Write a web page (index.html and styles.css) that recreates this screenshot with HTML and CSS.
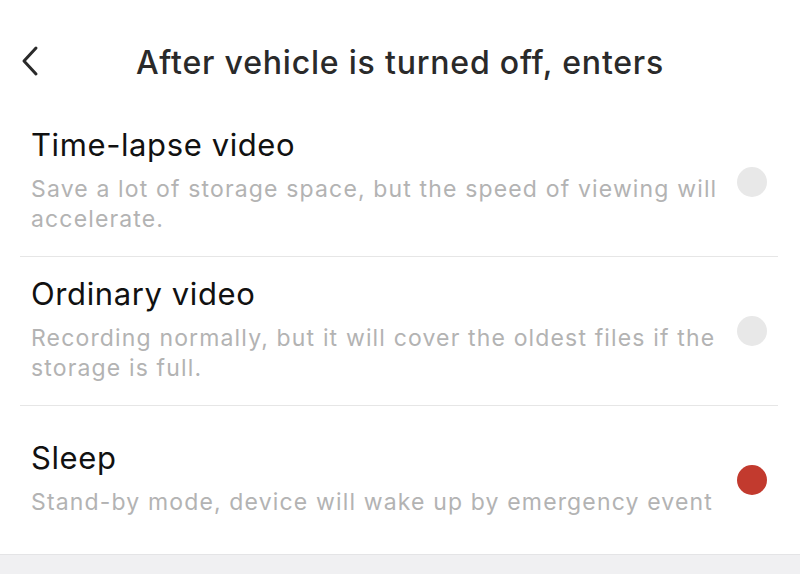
FILE: index.html
```html
<!DOCTYPE html>
<html>
<head>
<meta charset="utf-8">
<link rel="stylesheet" href="styles.css">
</head>
<body>
<div class="page">
  <header class="header">
    <span class="back">
      <svg width="20" height="32" viewBox="0 0 20 32"><path d="M16 3 L4 16 L16 29" fill="none" stroke="#2a2a2a" stroke-width="3" stroke-linecap="round" stroke-linejoin="round"/></svg>
    </span>
    <h1 class="title">After vehicle is turned off, enters</h1>
  </header>
  <ul class="list">
    <li class="item">
      <div class="text">
        <div class="name">Time-lapse video</div>
        <div class="desc">Save a lot of storage space, but the speed of viewing will accelerate.</div>
      </div>
      <span class="radio"></span>
    </li>
    <li class="item">
      <div class="text">
        <div class="name">Ordinary video</div>
        <div class="desc">Recording normally, but it will cover the oldest files if the storage is full.</div>
      </div>
      <span class="radio"></span>
    </li>
    <li class="item">
      <div class="text">
        <div class="name">Sleep</div>
        <div class="desc">Stand-by mode, device will wake up by emergency event</div>
      </div>
      <span class="radio on"></span>
    </li>
  </ul>
  <div class="footer"></div>
</div>
</body>
</html>
```
FILE: styles.css
```css
html, body { margin: 0; padding: 0; background: #fff; }
body { font-family: Inter, "Liberation Sans", Arial, sans-serif; }
.page { width: 800px; height: 574px; display: flex; flex-direction: column; overflow: hidden; }
.header { height: 108px; position: relative; display: flex; align-items: center; justify-content: center; padding-top: 16px; box-sizing: border-box; }
.back { position: absolute; left: 20px; top: 45px; width: 20px; height: 32px; }
.back svg { display: block; }
.title { margin: 0; font-size: 32px; font-weight: 500; color: #2a2a2a; letter-spacing: 0.8px; }
.list { list-style: none; margin: 0 22px 0 20px; padding: 0; }
.item { height: 149px; display: flex; align-items: center; padding-left: 11px; padding-right: 11px; border-bottom: 1px solid #e6e6e6; box-sizing: border-box; }
.item:last-child { border-bottom: none; height: 148px; }
.text { flex: 1; padding-right: 8px; padding-bottom: 3px; }
.name { font-size: 31px; line-height: 36px; color: #111; margin-bottom: 11px; letter-spacing: 0.6px; }
.desc { font-size: 23px; line-height: 30px; color: #b3b3b3; letter-spacing: 1.15px; }
.radio { width: 30px; height: 30px; border-radius: 50%; background: #e8e8e8; flex: none; }
.radio.on { background: #c23a2e; }
.footer { flex: 1; background: #f0f0f2; border-top: 1px solid #e4e4e6; }
```
